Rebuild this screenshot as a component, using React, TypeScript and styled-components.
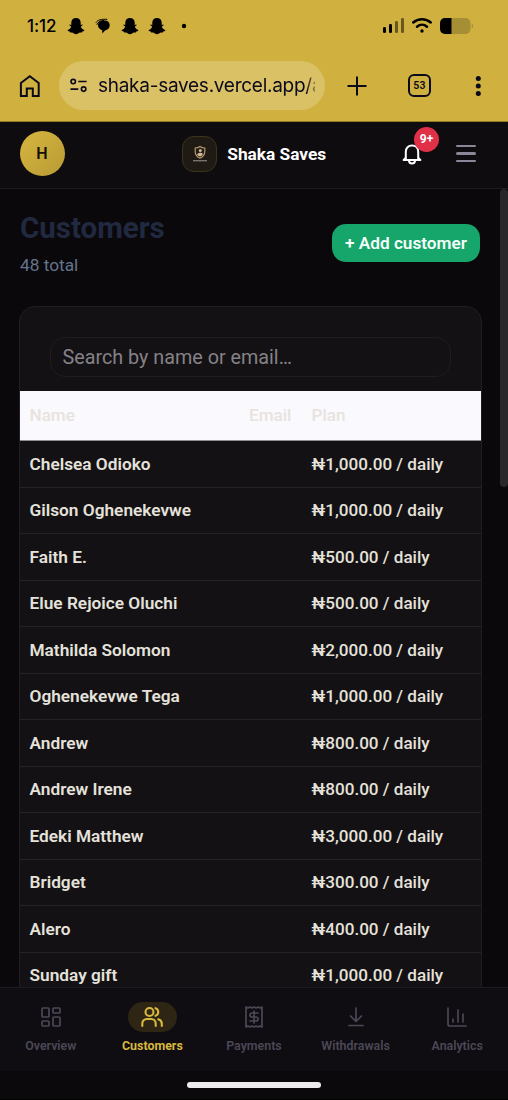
import React from "react";
import styled, { createGlobalStyle } from "styled-components";

const GlobalStyle = createGlobalStyle`
  * { box-sizing: border-box; }
  html, body { margin: 0; padding: 0; background: #0a080b; overflow: hidden; }
  body { font-family: Roboto, "Noto Sans", sans-serif; }
  button, input { font: inherit; border: 0; padding: 0; background: none; color: inherit; }
`;

const Screen = styled.div`
  width: 508px;
  height: 1100px;
  display: flex;
  flex-direction: column;
  overflow: hidden;
  background: #0a080b;
`;

/* ---------- Phone and browser bars ---------- */

const BrowserChrome = styled.div`
  flex: none;
  height: 122px;
  background: #d0b140;
  border-bottom: 1px solid #927b26;
  color: #0b0a1c;
`;

const StatusBar = styled.div`
  height: 50px;
  display: flex;
  align-items: center;
  justify-content: space-between;
  padding: 1px 34px 0 27px;
  color: #000;
`;

const StatusLeft = styled.div`
  display: flex;
  align-items: center;
`;

const Clock = styled.span`
  width: 40px;
  font: 500 17px/20px Inter, sans-serif;
  letter-spacing: -0.1px;
`;

const StatusIcon = styled.svg<{ $gap?: number }>`
  display: block;
  flex: none;
  margin-left: ${(p) => p.$gap ?? 0}px;
`;

const AddressRow = styled.div`
  height: 71px;
  display: flex;
  align-items: center;
  padding-left: 18px;
`;

const AddressPill = styled.div`
  width: 266px;
  height: 49px;
  margin: 0 20px 0 18px;
  padding: 0 10px 0 11px;
  display: flex;
  align-items: center;
  border-radius: 25px;
  background: #dac166;
`;

const Address = styled.span`
  flex: none;
  width: 217px;
  margin-left: 10.500px;
  overflow: hidden;
  white-space: nowrap;
  font: 400 19px/26px Inter, sans-serif;
  letter-spacing: -0.27px;
  mask-image: linear-gradient(90deg, #000 208px, rgba(0, 0, 0, 0.35) 217px);
`;

const TabCount = styled.div`
  width: 23px;
  height: 23px;
  margin: 0 44px 0 39px;
  display: flex;
  align-items: center;
  justify-content: center;
  border: 2px solid #0b0a1c;
  border-radius: 6px;
  font: 600 10.500px/12px Roboto, sans-serif;
  letter-spacing: 0.3px;
`;

/* ---------- App header ---------- */

const Header = styled.header`
  flex: none;
  height: 67px;
  display: flex;
  align-items: center;
  justify-content: space-between;
  padding: 0 30px 3px 19.500px;
  background: #0f0c10;
  border-bottom: 1px solid #1d1b1e;
`;

const Avatar = styled.div`
  width: 45px;
  height: 45px;
  display: flex;
  align-items: center;
  justify-content: center;
  border-radius: 50%;
  background: linear-gradient(135deg, #d6b53f, #b89b35);
  color: #161006;
  font-size: 16px;
  font-weight: 600;
`;

const Brand = styled.div`
  display: flex;
  align-items: center;
  gap: 10px;
  margin-left: 42px;
  color: #fff;
  font-size: 17.3px;
  font-weight: 700;
`;

const BrandMark = styled.div`
  width: 35px;
  height: 36px;
  display: flex;
  align-items: center;
  justify-content: center;
  border: 1px solid #3d331b;
  border-radius: 12px;
  background: #1f1a14;
`;

const HeaderActions = styled.div`
  display: flex;
  align-items: center;
  gap: 32px;
`;

const BellButton = styled.button`
  position: relative;
  display: block;
  height: 24px;
  color: #fff;
`;

const Badge = styled.span`
  position: absolute;
  left: 12px;
  top: -15px;
  width: 25px;
  height: 25px;
  border-radius: 50%;
  background: #e03048;
  color: #fff;
  font-size: 12px;
  font-weight: 700;
  line-height: 24px;
  text-align: center;
`;

const MenuButton = styled.button`
  width: 24px;
  display: flex;
  flex-direction: column;
  align-items: center;
  gap: 5px;
`;

const MenuLine = styled.span`
  width: 20px;
  height: 2.4px;
  border-radius: 2px;
  background: #8b8798;
`;

/* ---------- Customers page ---------- */

const Main = styled.main`
  flex: none;
  height: 798px;
  display: flex;
  overflow: hidden;
`;

const Content = styled.div`
  width: 500px;
  padding: 21px 18px 0 19px;
`;

const TitleRow = styled.div`
  display: flex;
  align-items: center;
  justify-content: space-between;
  height: 65px;
  padding: 0 2px 0 1px;
`;

const Title = styled.h1`
  margin: 0;
  padding-top: 2px;
  color: #202940;
  font-size: 29.5px;
  font-weight: 700;
  line-height: 36px;
`;

const Subtitle = styled.p`
  margin: 7px 0 0;
  color: #64748b;
  font-size: 17.3px;
  line-height: 24px;
`;

const AddButton = styled.button`
  width: 148px;
  height: 38px;
  border-radius: 14px;
  background: #16a56b;
  color: #f5fff9;
  font-size: 17.2px;
  font-weight: 600;
  white-space: nowrap;
`;

const Card = styled.section`
  width: 463px;
  height: 760px;
  margin-top: 31px;
  overflow: hidden;
  border: 1px solid #201e22;
  border-radius: 16px 16px 0 0;
  background: #131114;
`;

const SearchBox = styled.div`
  height: 40px;
  margin: 30px 30px 14px;
  padding: 0 11.500px;
  display: flex;
  align-items: center;
  border: 1px solid #1f1d20;
  border-radius: 15px;
`;

const SearchInput = styled.input`
  width: 100%;
  outline: none;
  font-size: 19.75px;
  &::placeholder { color: #858287; opacity: 1; }
`;

const Table = styled.div`
  font-size: 17.100px;
  font-weight: 500;
  white-space: nowrap;
`;

const HeadRow = styled.div`
  height: 50px;
  display: grid;
  grid-template-columns: 219.500px 62.500px 1fr;
  align-items: center;
  padding: 0 0 1px 9.500px;
  border-bottom: 1px solid #8f8e94;
  background: #faf9fe;
  color: #e8e3dd;
`;

const BodyRow = styled.div`
  height: 46.52px;
  display: grid;
  grid-template-columns: 282px 1fr;
  align-items: center;
  padding-left: 9.500px;
  border-bottom: 1px solid #242225;
  color: #e5e2db;
`;

const CustomerName = styled.span`
  font-size: 17.250px;
  font-weight: 600;
`;

const ScrollThumb = styled.div`
  flex: none;
  width: 8px;
  height: 298px;
  border-radius: 4px;
  background: #29272a;
`;

/* ---------- Bottom navigation ---------- */

const BottomNav = styled.nav`
  flex: none;
  height: 84px;
  display: grid;
  grid-template-columns: repeat(5, 101.6px);
  padding-top: 14px;
  border-top: 1px solid #1d1b1e;
  background: #0f0d11;
`;

const NavItem = styled.button<{ $active?: boolean }>`
  display: flex;
  flex-direction: column;
  align-items: center;
  justify-content: flex-start;
  gap: 6px;
  color: ${(p) => (p.$active ? "#d8b83d" : "#4c4756")};
  font-size: 12.4px;
  font-weight: ${(p) => (p.$active ? 700 : 600)};
  line-height: 16px;
`;

const NavIcon = styled.span<{ $active?: boolean }>`
  width: 49px;
  height: 30px;
  display: flex;
  align-items: center;
  justify-content: center;
  border-radius: 15px;
  background: ${(p) => (p.$active ? "#2e2514" : "transparent")};
`;

const GestureArea = styled.div`
  flex: 1;
  display: flex;
  justify-content: center;
  padding-top: 11px;
  border-bottom: 1px solid #000;
  background: #0b090c;
`;

const GestureBar = styled.div`
  width: 134px;
  height: 6px;
  border-radius: 3px;
  background: #ececee;
`;

/* ---------- Icons ---------- */

const Ghost = ({ gap }: { gap?: number }) => (
  <StatusIcon $gap={gap} width="18" height="18" viewBox="0 0 18 18" fill="currentColor">
    <path d="M9 1C6.1 1 4.300 3 4.300 5.800v2.100L2.800 7.600c-.6.2-.6.7-.1 1l1.500.9C3.700 11.300 2.300 12.400.8 13c-.3.2-.2.7.2.9l1.700.5.4 1c.9 0 1.900-.1 2.700.3C6.800 16.400 7.600 17.200 9 17.200s2.200-.8 3.200-1.500c.8-.4 1.800-.3 2.700-.3l.4-1 1.700-.5c.4-.2.5-.7.2-.9-1.500-.6-2.900-1.700-3.400-3.500l1.500-.9c.5-.3.5-.8-.1-1l-1.500.3V5.800C13.700 3 11.900 1 9 1Z" />
  </StatusIcon>
);

const ChatBubble = () => (
  <StatusIcon $gap={10} width="16" height="16" viewBox="0 0 16 16" fill="currentColor">
    <path d="M9.200 2.600c3.500 0 5.500 2 5.500 4.700 0 2.700-2 4.700-4.700 5.100L7.400 15.400l-.3-3.200C4.500 11.400 3 9.600 3 7.300 3 4.600 5.500 2.600 9.200 2.600Z" />
    <path d="M.9 4.700C2.500 1.900 6.500.8 12.300 1.400M1.900 6.800C2.300 4.500 5 2.600 9 2.400" fill="none" stroke="currentColor" strokeWidth="1" />
  </StatusIcon>
);

const Signal = () => (
  <StatusIcon width="23" height="17" viewBox="0 0 23 17" fill="currentColor">
    <rect x="1" y="10" width="3" height="6" rx="1.300" />
    <rect x="7" y="7" width="3" height="9" rx="1.300" />
    <rect x="13" y="4" width="3" height="12" rx="1.300" opacity=".5" />
    <rect x="19" y="1" width="3" height="15" rx="1.300" opacity=".5" />
  </StatusIcon>
);

const Wifi = () => (
  <StatusIcon $gap={6} width="22" height="17" viewBox="0 0 22 17" fill="none" stroke="currentColor" strokeWidth="2.500" strokeLinecap="round">
    <path d="M2.200 5.500c5-4.500 12.600-4.500 17.600 0M6 9.700c3-2.600 7-2.600 10 0" />
    <circle cx="11" cy="14" r="1.700" fill="currentColor" stroke="none" />
  </StatusIcon>
);

const Battery = () => (
  <StatusIcon $gap={7} width="34" height="18" viewBox="0 0 34 18">
    <rect x="0" y="1" width="30.500" height="16" rx="5" fill="#a68e34" />
    <path d="M11.500 1v16H5a5 5 0 0 1-5-5V6a5 5 0 0 1 5-5Z" fill="#000" />
    <path d="M31.700 6.500v5c1-.4 1.500-1.300 1.500-2.500s-.5-2.100-1.500-2.500Z" fill="#a68e34" />
  </StatusIcon>
);

const HomeIcon = () => (
  <svg width="23" height="24" viewBox="0 0 23 24" fill="none" stroke="currentColor" strokeWidth="2">
    <path d="M2.900 9 11.800 2.300 20.700 9v13h-5.900v-7.500h-6v7.500H2.900Z" />
  </svg>
);

const SiteSettingsIcon = () => (
  <svg width="19" height="17" viewBox="0 0 19 17" fill="none" stroke="currentColor" strokeWidth="1.800">
    <circle cx="3.500" cy="4.200" r="2.400" />
    <path d="M9 4.200h9M.5 12.400h8.500" />
    <circle cx="14.800" cy="12.400" r="2.400" />
  </svg>
);

const PlusIcon = () => (
  <svg width="24" height="24" viewBox="0 0 24 24" fill="none" stroke="currentColor" strokeWidth="2">
    <path d="M12 2.500v19M2.500 12h19" />
  </svg>
);

const DotsIcon = () => (
  <svg width="6" height="22" viewBox="0 0 6 22" fill="currentColor">
    <circle cx="3.300" cy="3.500" r="2.500" />
    <circle cx="3.300" cy="11" r="2.500" />
    <circle cx="3.300" cy="18.500" r="2.500" />
  </svg>
);

const ShieldLogo = () => (
  <svg width="16" height="18" viewBox="0 0 16 18">
    <path d="M8 1.500c1.600 1.200 3 1.500 4.800 1.500v3.600c0 3.300-1.800 5.300-4.800 6.700-3-1.400-4.800-3.400-4.800-6.700V3C5 3 6.400 2.700 8 1.500Z" fill="#241d17" stroke="#b09a70" strokeWidth="1.200" />
    <circle cx="8.300" cy="5.600" r="1.500" fill="#cdb792" />
    <path d="M5 9.600c1.400-1.800 4.400-2.500 6-.7-.7 1.300-1.700 2-3 2.700-1.200-.5-2.200-1.100-3-2Z" fill="#d6b995" />
    <path d="M1 15.700h14" stroke="#77736c" strokeWidth="1.400" />
  </svg>
);

const BellIcon = () => (
  <svg width="20" height="24" viewBox="0 0 20 24" fill="none" stroke="currentColor" strokeWidth="2" strokeLinejoin="round" strokeLinecap="round">
    <path d="M1.600 17.900h16.800M3.800 17.200V9.800c0-3.900 2.500-6.300 6.200-6.300s6.200 2.400 6.200 6.300v7.400M2 17.500c1-.6 1.800-1.600 1.800-3M18 17.500c-1-.6-1.800-1.600-1.800-3" />
    <path d="M7 18.500c0 1.800 1.200 3 3 3s3-1.200 3-3" />
  </svg>
);

const NavSvg = ({ children, width = 1.700 }: { children: React.ReactNode; width?: number }) => (
  <svg width="24" height="24" viewBox="0 0 24 24" fill="none" stroke="currentColor" strokeWidth={width} strokeLinecap="round" strokeLinejoin="round">
    {children}
  </svg>
);

const OverviewIcon = () => (
  <NavSvg>
    <rect x="3" y="3" width="7" height="9" rx="1" />
    <rect x="14" y="3" width="7" height="5" rx="1" />
    <rect x="14" y="12" width="7" height="9" rx="1" />
    <rect x="3" y="16" width="7" height="5" rx="1" />
  </NavSvg>
);

const CustomersIcon = () => (
  <NavSvg width={2.100}>
    <path d="M2.300 21v-2.500a4.500 4.500 0 0 1 4.500-4.500h4.400a4.500 4.500 0 0 1 4.500 4.500V21" />
    <circle cx="9.500" cy="7" r="4" />
    <path d="M15.500 3.200a4 4 0 0 1 0 7.600M18.300 14.300c2.300.7 3.500 2.300 3.500 4.400V21" />
  </NavSvg>
);

const PaymentsIcon = () => (
  <NavSvg>
    <path d="M4 2v20l2-1 2 1 2-1 2 1 2-1 2 1 2-1 2 1V2l-2 1-2-1-2 1-2-1-2 1-2-1-2 1Z" />
    <path d="M16 8h-6a2 2 0 1 0 0 4h4a2 2 0 1 1 0 4H8M12 6v12" />
  </NavSvg>
);

const WithdrawalsIcon = () => (
  <NavSvg>
    <path d="M12 3v13.500M6.500 11l5.500 5.500 5.500-5.500M5 20.500h14" />
  </NavSvg>
);

const AnalyticsIcon = () => (
  <NavSvg>
    <path d="M3 3v16a2 2 0 0 0 2 2h16M8 17v-3M13 17V5M18 17V9" />
  </NavSvg>
);

/* ---------- Data ---------- */

const customers = [
  ["Chelsea Odioko", "1,000.00"],
  ["Gilson Oghenekevwe", "1,000.00"],
  ["Faith E.", "500.00"],
  ["Elue Rejoice Oluchi", "500.00"],
  ["Mathilda Solomon", "2,000.00"],
  ["Oghenekevwe Tega", "1,000.00"],
  ["Andrew", "800.00"],
  ["Andrew Irene", "800.00"],
  ["Edeki Matthew", "3,000.00"],
  ["Bridget", "300.00"],
  ["Alero", "400.00"],
  ["Sunday gift", "1,000.00"],
];

const tabs = [
  { label: "Overview", Icon: OverviewIcon },
  { label: "Customers", Icon: CustomersIcon, active: true },
  { label: "Payments", Icon: PaymentsIcon },
  { label: "Withdrawals", Icon: WithdrawalsIcon },
  { label: "Analytics", Icon: AnalyticsIcon },
];

export default function App() {
  return (
    <Screen>
      <GlobalStyle />
      <BrowserChrome>
        <StatusBar>
          <StatusLeft>
            <Clock>1:12</Clock>
            <Ghost />
            <ChatBubble />
            <Ghost gap={10} />
            <Ghost gap={9} />
            <StatusIcon $gap={15} width="6" height="6" viewBox="0 0 6 6">
              <circle cx="3" cy="3" r="2.200" />
            </StatusIcon>
          </StatusLeft>
          <StatusLeft>
            <Signal />
            <Wifi />
            <Battery />
          </StatusLeft>
        </StatusBar>
        <AddressRow>
          <HomeIcon />
          <AddressPill>
            <SiteSettingsIcon />
            <Address>shaka-saves.vercel.app/a</Address>
          </AddressPill>
          <PlusIcon />
          <TabCount>53</TabCount>
          <DotsIcon />
        </AddressRow>
      </BrowserChrome>

      <Header>
        <Avatar>H</Avatar>
        <Brand>
          <BrandMark><ShieldLogo /></BrandMark>
          Shaka Saves
        </Brand>
        <HeaderActions>
          <BellButton aria-label="Notifications">
            <BellIcon />
            <Badge>9+</Badge>
          </BellButton>
          <MenuButton aria-label="Menu">
            <MenuLine />
            <MenuLine />
            <MenuLine />
          </MenuButton>
        </HeaderActions>
      </Header>

      <Main>
        <Content>
          <TitleRow>
            <div>
              <Title>Customers</Title>
              <Subtitle>48 total</Subtitle>
            </div>
            <AddButton>+ Add customer</AddButton>
          </TitleRow>
          <Card>
            <SearchBox>
              <SearchInput placeholder="Search by name or email…" />
            </SearchBox>
            <Table>
              <HeadRow>
                <span>Name</span>
                <span>Email</span>
                <span>Plan</span>
              </HeadRow>
              {customers.map(([name, amount]) => (
                <BodyRow key={name}>
                  <CustomerName>{name}</CustomerName>
                  <span>₦{amount} / daily</span>
                </BodyRow>
              ))}
            </Table>
          </Card>
        </Content>
        <ScrollThumb />
      </Main>

      <BottomNav>
        {tabs.map(({ label, Icon, active }) => (
          <NavItem key={label} $active={active}>
            <NavIcon $active={active}><Icon /></NavIcon>
            {label}
          </NavItem>
        ))}
      </BottomNav>
      <GestureArea>
        <GestureBar />
      </GestureArea>
    </Screen>
  );
}
